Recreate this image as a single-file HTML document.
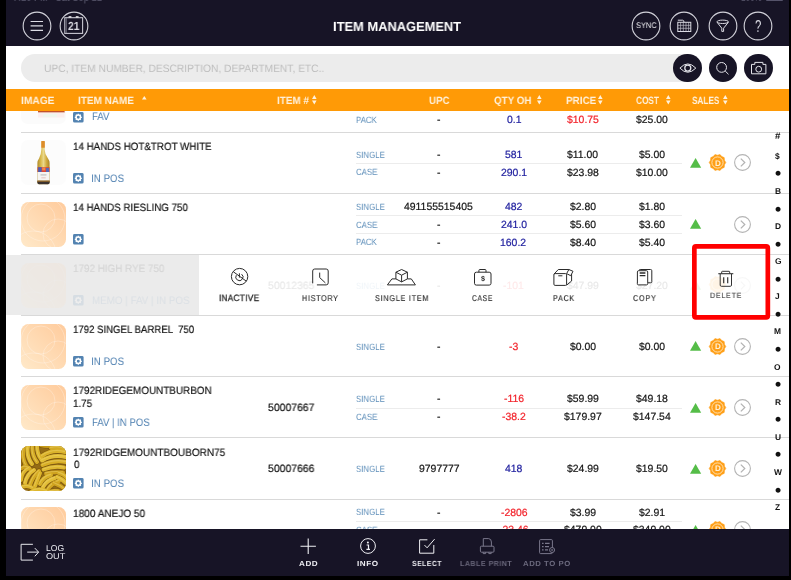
<!DOCTYPE html>
<html lang="en"><head><meta charset="utf-8"><title>Item Management</title>
<style>
html,body{margin:0;padding:0;}
body{width:791px;height:580px;background:#000;overflow:hidden;position:relative;font-family:"Liberation Sans", sans-serif;}
#app{position:absolute;left:0;top:0;width:791px;height:580px;overflow:hidden;}
#app div,#app svg,#app span.t{position:absolute;}
#app svg{overflow:visible;}
span.t{white-space:pre;transform-origin:0 50%;will-change:transform;text-rendering:geometricPrecision;}
</style></head><body><div id="app">
<div style="left:6px;top:0px;width:783px;height:576px;background:#fff;"></div>
<svg style="left:21px;top:79.2px;" width="45" height="45" viewBox="0 0 45 45"><rect width="45" height="45" rx="7" fill="#fbfbfb"/><rect x="17" y="31" width="26.6" height="2.6" fill="#c2522c"/><rect x="17" y="33.6" width="26.6" height="5" fill="#fbeeee"/><rect x="22" y="35" width="14" height="3" fill="#eef7ee"/></svg>
<svg style="left:73.3px;top:111.5px;" width="10.6" height="10.6" viewBox="0 0 10.6 10.6"><rect width="10.6" height="10.6" rx="1.5" fill="#5383b1"/><circle cx="5.3" cy="5.3" r="2.2" fill="none" stroke="#fff" stroke-width="1.5"/><g stroke="#fff" stroke-width="1.25"><path d="M5.3 1.8v1.4M5.3 7.4v1.4M1.8 5.3h1.4M7.4 5.3h1.4M2.8 2.8l1 1M6.8 6.8l1 1M2.8 7.8l1-1M6.8 3.8l1-1"/></g></svg>
<span class="t" style="left:91.70px;top:112px;font-size:10.87px;line-height:10.87px;color:#4d7fb0;transform:scaleX(0.8800);">FAV</span>
<span class="t" style="left:356.40px;top:116px;font-size:9.13px;line-height:9.13px;color:#5f8fba;transform:scaleX(0.8600);">PACK</span>
<span class="t" style="left:437.30px;top:116px;font-size:10.43px;line-height:10.43px;color:#151515;transform:scaleX(1.0000);-webkit-text-stroke:0.2px #151515;">-</span>
<span class="t" style="left:506.60px;top:116px;font-size:10.43px;line-height:10.43px;color:#2323a0;transform:scaleX(1.0000);-webkit-text-stroke:0.2px #2323a0;">0.1</span>
<span class="t" style="left:566.50px;top:116px;font-size:10.43px;line-height:10.43px;color:#f2232b;transform:scaleX(1.0000);-webkit-text-stroke:0.2px #f2232b;">$10.75</span>
<span class="t" style="left:635.50px;top:116px;font-size:10.43px;line-height:10.43px;color:#151515;transform:scaleX(1.0000);-webkit-text-stroke:0.2px #151515;">$25.00</span>
<svg style="left:21px;top:140.4px;" width="45" height="45" viewBox="0 0 45 45"><defs><linearGradient id="bg1" x1="0" x2="1"><stop offset="0" stop-color="#b08a2a"/><stop offset=".28" stop-color="#d9ba4c"/><stop offset=".5" stop-color="#ead88a"/><stop offset=".75" stop-color="#d0aa3e"/><stop offset="1" stop-color="#a98426"/></linearGradient></defs>
<rect width="45" height="45" rx="7" fill="#fcfcfc"/>
<path d="M20.5 1.2H23.6V9.5Q23.8 14.5 27 18.5Q28.6 20.6 28.6 23V42.6Q28.6 44.2 27 44.2H18Q16.4 44.2 16.4 42.6V23Q16.4 20.6 18 18.5Q20.2 14.5 20.3 9.5Z" fill="url(#bg1)"/>
<rect x="20.3" y="1" width="3.5" height="6.8" rx=".6" fill="#dd8c2a"/>
<rect x="16.5" y="27.2" width="12" height="4.8" fill="#d8453a"/><rect x="17.2" y="27.2" width="3.4" height="4.8" fill="#4a5fb5"/><rect x="25" y="28" width="3" height="4" fill="#5868b8"/><rect x="21.2" y="27.4" width="3.2" height="3" fill="#f08a4a"/>
<rect x="16.5" y="32" width="12" height="8.8" fill="#f6f4f2"/><rect x="19.5" y="34.6" width="6" height=".7" fill="#999"/><rect x="20.3" y="37.6" width="4.4" height=".6" fill="#d9a0a0"/>
<path d="M16.4 40.8H28.6V42.6Q28.6 44.2 27 44.2H18Q16.4 44.2 16.4 42.6Z" fill="#3a3230"/><rect x="16.4" y="40.6" width="12.2" height="1" fill="#b07a28"/></svg>
<div style="left:21px;top:131.9px;width:768px;height:1px;background:#d9d9d9;"></div>
<span class="t" style="left:72.87px;top:142px;font-size:10.58px;line-height:10.58px;color:#151515;transform:scaleX(0.9264);-webkit-text-stroke:0.2px #151515;">14 HANDS HOT&amp;TROT WHITE</span>
<svg style="left:73.3px;top:172.60000000000002px;" width="10.6" height="10.6" viewBox="0 0 10.6 10.6"><rect width="10.6" height="10.6" rx="1.5" fill="#5383b1"/><circle cx="5.3" cy="5.3" r="2.2" fill="none" stroke="#fff" stroke-width="1.5"/><g stroke="#fff" stroke-width="1.25"><path d="M5.3 1.8v1.4M5.3 7.4v1.4M1.8 5.3h1.4M7.4 5.3h1.4M2.8 2.8l1 1M6.8 6.8l1 1M2.8 7.8l1-1M6.8 3.8l1-1"/></g></svg>
<span class="t" style="left:90.80px;top:174px;font-size:10.87px;line-height:10.87px;color:#4d7fb0;transform:scaleX(0.9000);">IN POS</span>
<span class="t" style="left:356.40px;top:151px;font-size:9.13px;line-height:9.13px;color:#5f8fba;transform:scaleX(0.8600);">SINGLE</span>
<span class="t" style="left:437.30px;top:151px;font-size:10.43px;line-height:10.43px;color:#151515;transform:scaleX(1.0000);-webkit-text-stroke:0.2px #151515;">-</span>
<span class="t" style="left:505.10px;top:151px;font-size:10.43px;line-height:10.43px;color:#2323a0;transform:scaleX(1.0000);-webkit-text-stroke:0.2px #2323a0;">581</span>
<span class="t" style="left:567.00px;top:151px;font-size:10.43px;line-height:10.43px;color:#151515;transform:scaleX(1.0000);-webkit-text-stroke:0.2px #151515;">$11.00</span>
<span class="t" style="left:638.50px;top:151px;font-size:10.43px;line-height:10.43px;color:#151515;transform:scaleX(1.0000);-webkit-text-stroke:0.2px #151515;">$5.00</span>
<div style="left:356.4px;top:163.2px;width:325.5px;height:1px;background:#ececec;"></div>
<span class="t" style="left:356.40px;top:168px;font-size:9.13px;line-height:9.13px;color:#5f8fba;transform:scaleX(0.8600);">CASE</span>
<span class="t" style="left:437.30px;top:169px;font-size:10.43px;line-height:10.43px;color:#151515;transform:scaleX(1.0000);-webkit-text-stroke:0.2px #151515;">-</span>
<span class="t" style="left:500.60px;top:169px;font-size:10.43px;line-height:10.43px;color:#2323a0;transform:scaleX(1.0000);-webkit-text-stroke:0.2px #2323a0;">290.1</span>
<span class="t" style="left:566.50px;top:169px;font-size:10.43px;line-height:10.43px;color:#151515;transform:scaleX(1.0000);-webkit-text-stroke:0.2px #151515;">$23.98</span>
<span class="t" style="left:635.50px;top:169px;font-size:10.43px;line-height:10.43px;color:#151515;transform:scaleX(1.0000);-webkit-text-stroke:0.2px #151515;">$10.00</span>
<svg style="left:690.1px;top:158.1px;" width="11.2" height="9.8" viewBox="0 0 11.2 9.8"><path d="M5.6 0L11.2 9.8H0Z" fill="#55bd48"/></svg>
<svg style="left:709.2px;top:154.20000000000002px;" width="17" height="17" viewBox="0 0 17 17"><polygon points="16.80,8.50 15.44,10.76 15.21,13.38 12.79,14.41 11.06,16.39 8.50,15.80 5.94,16.39 4.21,14.41 1.79,13.38 1.56,10.76 0.20,8.50 1.56,6.24 1.79,3.62 4.21,2.59 5.94,0.61 8.50,1.20 11.06,0.61 12.79,2.59 15.21,3.62 15.44,6.24" fill="#ff9f17" stroke="#ff9f17" stroke-width=".6" stroke-linejoin="round"/><circle cx="8.5" cy="8.5" r="5.6" fill="none" stroke="#ffe6bd" stroke-width=".9"/></svg>
<span class="t" style="left:714.95px;top:160px;font-size:8.12px;line-height:8.12px;color:#fff0d6;transform:scaleX(0.9500);font-weight:700;">D</span>
<svg style="left:734.0px;top:154.4px;" width="17" height="17" viewBox="0 0 17 17"><circle cx="8.5" cy="8.5" r="7.9" fill="none" stroke="#b4b4b4" stroke-width="1.1"/><path d="M6.8 4.6L10.8 8.5L6.8 12.4" fill="none" stroke="#b2b2b2" stroke-width="1.2"/></svg>
<svg style="left:21px;top:201.5px;" width="45" height="45" viewBox="0 0 45 45"><defs><linearGradient id="pg" x1="0" y1="1" x2="1" y2="0"><stop offset="0" stop-color="#ffe9c9"/><stop offset="1" stop-color="#ffcb9c"/></linearGradient><clipPath id="pc"><rect width="45" height="45" rx="7.5"/></clipPath></defs><rect width="45" height="45" rx="7.5" fill="url(#pg)"/><g clip-path="url(#pc)" fill="none" stroke="#fff" stroke-opacity=".55" stroke-width=".5"><circle cx="20" cy="16" r="14"/><circle cx="37" cy="32" r="15"/><circle cx="12" cy="52" r="23"/><circle cx="22" cy="17" r="22"/></g></svg>
<div style="left:21px;top:193.0px;width:768px;height:1px;background:#d9d9d9;"></div>
<span class="t" style="left:72.88px;top:203px;font-size:10.58px;line-height:10.58px;color:#151515;transform:scaleX(0.9218);-webkit-text-stroke:0.2px #151515;">14 HANDS RIESLING 750</span>
<svg style="left:73.3px;top:233.7px;" width="10.6" height="10.6" viewBox="0 0 10.6 10.6"><rect width="10.6" height="10.6" rx="1.5" fill="#5383b1"/><circle cx="5.3" cy="5.3" r="2.2" fill="none" stroke="#fff" stroke-width="1.5"/><g stroke="#fff" stroke-width="1.25"><path d="M5.3 1.8v1.4M5.3 7.4v1.4M1.8 5.3h1.4M7.4 5.3h1.4M2.8 2.8l1 1M6.8 6.8l1 1M2.8 7.8l1-1M6.8 3.8l1-1"/></g></svg>
<span class="t" style="left:356.40px;top:203px;font-size:9.13px;line-height:9.13px;color:#5f8fba;transform:scaleX(0.8600);">SINGLE</span>
<span class="t" style="left:404.30px;top:203px;font-size:10.43px;line-height:10.43px;color:#151515;transform:scaleX(1.0000);-webkit-text-stroke:0.2px #151515;">491155515405</span>
<span class="t" style="left:505.10px;top:203px;font-size:10.43px;line-height:10.43px;color:#2323a0;transform:scaleX(1.0000);-webkit-text-stroke:0.2px #2323a0;">482</span>
<span class="t" style="left:569.50px;top:203px;font-size:10.43px;line-height:10.43px;color:#151515;transform:scaleX(1.0000);-webkit-text-stroke:0.2px #151515;">$2.80</span>
<span class="t" style="left:638.50px;top:203px;font-size:10.43px;line-height:10.43px;color:#151515;transform:scaleX(1.0000);-webkit-text-stroke:0.2px #151515;">$1.80</span>
<div style="left:356.4px;top:215.4px;width:325.5px;height:1px;background:#ececec;"></div>
<span class="t" style="left:356.40px;top:221px;font-size:9.13px;line-height:9.13px;color:#5f8fba;transform:scaleX(0.8600);">CASE</span>
<span class="t" style="left:437.30px;top:221px;font-size:10.43px;line-height:10.43px;color:#151515;transform:scaleX(1.0000);-webkit-text-stroke:0.2px #151515;">-</span>
<span class="t" style="left:500.60px;top:221px;font-size:10.43px;line-height:10.43px;color:#2323a0;transform:scaleX(1.0000);-webkit-text-stroke:0.2px #2323a0;">241.0</span>
<span class="t" style="left:569.50px;top:221px;font-size:10.43px;line-height:10.43px;color:#151515;transform:scaleX(1.0000);-webkit-text-stroke:0.2px #151515;">$5.60</span>
<span class="t" style="left:638.50px;top:221px;font-size:10.43px;line-height:10.43px;color:#151515;transform:scaleX(1.0000);-webkit-text-stroke:0.2px #151515;">$3.60</span>
<div style="left:356.4px;top:233.2px;width:325.5px;height:1px;background:#ececec;"></div>
<span class="t" style="left:356.40px;top:238px;font-size:9.13px;line-height:9.13px;color:#5f8fba;transform:scaleX(0.8600);">PACK</span>
<span class="t" style="left:437.30px;top:239px;font-size:10.43px;line-height:10.43px;color:#151515;transform:scaleX(1.0000);-webkit-text-stroke:0.2px #151515;">-</span>
<span class="t" style="left:500.10px;top:239px;font-size:10.43px;line-height:10.43px;color:#2323a0;transform:scaleX(1.0000);-webkit-text-stroke:0.2px #2323a0;">160.2</span>
<span class="t" style="left:569.50px;top:239px;font-size:10.43px;line-height:10.43px;color:#151515;transform:scaleX(1.0000);-webkit-text-stroke:0.2px #151515;">$8.40</span>
<span class="t" style="left:638.50px;top:239px;font-size:10.43px;line-height:10.43px;color:#151515;transform:scaleX(1.0000);-webkit-text-stroke:0.2px #151515;">$5.40</span>
<svg style="left:690.1px;top:219.2px;" width="11.2" height="9.8" viewBox="0 0 11.2 9.8"><path d="M5.6 0L11.2 9.8H0Z" fill="#55bd48"/></svg>
<svg style="left:734.0px;top:215.5px;" width="17" height="17" viewBox="0 0 17 17"><circle cx="8.5" cy="8.5" r="7.9" fill="none" stroke="#b4b4b4" stroke-width="1.1"/><path d="M6.8 4.6L10.8 8.5L6.8 12.4" fill="none" stroke="#b2b2b2" stroke-width="1.2"/></svg>
<svg style="left:21px;top:323.70000000000005px;" width="45" height="45" viewBox="0 0 45 45"><defs><linearGradient id="pg" x1="0" y1="1" x2="1" y2="0"><stop offset="0" stop-color="#ffe9c9"/><stop offset="1" stop-color="#ffcb9c"/></linearGradient><clipPath id="pc"><rect width="45" height="45" rx="7.5"/></clipPath></defs><rect width="45" height="45" rx="7.5" fill="url(#pg)"/><g clip-path="url(#pc)" fill="none" stroke="#fff" stroke-opacity=".55" stroke-width=".5"><circle cx="20" cy="16" r="14"/><circle cx="37" cy="32" r="15"/><circle cx="12" cy="52" r="23"/><circle cx="22" cy="17" r="22"/></g></svg>
<div style="left:21px;top:315.2px;width:768px;height:1px;background:#d9d9d9;"></div>
<span class="t" style="left:72.89px;top:325px;font-size:10.58px;line-height:10.58px;color:#151515;transform:scaleX(0.9083);-webkit-text-stroke:0.2px #151515;">1792 SINGEL BARREL  750</span>
<svg style="left:73.3px;top:355.90000000000003px;" width="10.6" height="10.6" viewBox="0 0 10.6 10.6"><rect width="10.6" height="10.6" rx="1.5" fill="#5383b1"/><circle cx="5.3" cy="5.3" r="2.2" fill="none" stroke="#fff" stroke-width="1.5"/><g stroke="#fff" stroke-width="1.25"><path d="M5.3 1.8v1.4M5.3 7.4v1.4M1.8 5.3h1.4M7.4 5.3h1.4M2.8 2.8l1 1M6.8 6.8l1 1M2.8 7.8l1-1M6.8 3.8l1-1"/></g></svg>
<span class="t" style="left:90.80px;top:357px;font-size:10.87px;line-height:10.87px;color:#4d7fb0;transform:scaleX(0.9000);">IN POS</span>
<span class="t" style="left:356.40px;top:343px;font-size:9.13px;line-height:9.13px;color:#5f8fba;transform:scaleX(0.8600);">SINGLE</span>
<span class="t" style="left:437.30px;top:343px;font-size:10.43px;line-height:10.43px;color:#151515;transform:scaleX(1.0000);-webkit-text-stroke:0.2px #151515;">-</span>
<span class="t" style="left:509.10px;top:343px;font-size:10.43px;line-height:10.43px;color:#f2232b;transform:scaleX(1.0000);-webkit-text-stroke:0.2px #f2232b;">-3</span>
<span class="t" style="left:569.50px;top:343px;font-size:10.43px;line-height:10.43px;color:#151515;transform:scaleX(1.0000);-webkit-text-stroke:0.2px #151515;">$0.00</span>
<span class="t" style="left:638.50px;top:343px;font-size:10.43px;line-height:10.43px;color:#151515;transform:scaleX(1.0000);-webkit-text-stroke:0.2px #151515;">$0.00</span>
<svg style="left:690.1px;top:341.40000000000003px;" width="11.2" height="9.8" viewBox="0 0 11.2 9.8"><path d="M5.6 0L11.2 9.8H0Z" fill="#55bd48"/></svg>
<svg style="left:709.2px;top:337.50000000000006px;" width="17" height="17" viewBox="0 0 17 17"><polygon points="16.80,8.50 15.44,10.76 15.21,13.38 12.79,14.41 11.06,16.39 8.50,15.80 5.94,16.39 4.21,14.41 1.79,13.38 1.56,10.76 0.20,8.50 1.56,6.24 1.79,3.62 4.21,2.59 5.94,0.61 8.50,1.20 11.06,0.61 12.79,2.59 15.21,3.62 15.44,6.24" fill="#ff9f17" stroke="#ff9f17" stroke-width=".6" stroke-linejoin="round"/><circle cx="8.5" cy="8.5" r="5.6" fill="none" stroke="#ffe6bd" stroke-width=".9"/></svg>
<span class="t" style="left:714.95px;top:343px;font-size:8.12px;line-height:8.12px;color:#fff0d6;transform:scaleX(0.9500);font-weight:700;">D</span>
<svg style="left:734.0px;top:337.70000000000005px;" width="17" height="17" viewBox="0 0 17 17"><circle cx="8.5" cy="8.5" r="7.9" fill="none" stroke="#b4b4b4" stroke-width="1.1"/><path d="M6.8 4.6L10.8 8.5L6.8 12.4" fill="none" stroke="#b2b2b2" stroke-width="1.2"/></svg>
<svg style="left:21px;top:384.8px;" width="45" height="45" viewBox="0 0 45 45"><defs><linearGradient id="pg" x1="0" y1="1" x2="1" y2="0"><stop offset="0" stop-color="#ffe9c9"/><stop offset="1" stop-color="#ffcb9c"/></linearGradient><clipPath id="pc"><rect width="45" height="45" rx="7.5"/></clipPath></defs><rect width="45" height="45" rx="7.5" fill="url(#pg)"/><g clip-path="url(#pc)" fill="none" stroke="#fff" stroke-opacity=".55" stroke-width=".5"><circle cx="20" cy="16" r="14"/><circle cx="37" cy="32" r="15"/><circle cx="12" cy="52" r="23"/><circle cx="22" cy="17" r="22"/></g></svg>
<div style="left:21px;top:376.3px;width:768px;height:1px;background:#d9d9d9;"></div>
<span class="t" style="left:72.86px;top:386px;font-size:10.58px;line-height:10.58px;color:#151515;transform:scaleX(0.9361);-webkit-text-stroke:0.2px #151515;">1792RIDEGEMOUNTBURBON</span>
<span class="t" style="left:72.88px;top:399px;font-size:10.58px;line-height:10.58px;color:#151515;transform:scaleX(0.9250);-webkit-text-stroke:0.2px #151515;">1.75</span>
<svg style="left:73.3px;top:417.0px;" width="10.6" height="10.6" viewBox="0 0 10.6 10.6"><rect width="10.6" height="10.6" rx="1.5" fill="#5383b1"/><circle cx="5.3" cy="5.3" r="2.2" fill="none" stroke="#fff" stroke-width="1.5"/><g stroke="#fff" stroke-width="1.25"><path d="M5.3 1.8v1.4M5.3 7.4v1.4M1.8 5.3h1.4M7.4 5.3h1.4M2.8 2.8l1 1M6.8 6.8l1 1M2.8 7.8l1-1M6.8 3.8l1-1"/></g></svg>
<span class="t" style="left:91.70px;top:418px;font-size:10.87px;line-height:10.87px;color:#4d7fb0;transform:scaleX(0.8815);">FAV | IN POS</span>
<span class="t" style="left:268.10px;top:403px;font-size:10.58px;line-height:10.58px;color:#151515;transform:scaleX(0.9850);-webkit-text-stroke:0.2px #151515;">50007667</span>
<span class="t" style="left:356.40px;top:395px;font-size:9.13px;line-height:9.13px;color:#5f8fba;transform:scaleX(0.8600);">SINGLE</span>
<span class="t" style="left:437.30px;top:395px;font-size:10.43px;line-height:10.43px;color:#151515;transform:scaleX(1.0000);-webkit-text-stroke:0.2px #151515;">-</span>
<span class="t" style="left:503.60px;top:395px;font-size:10.43px;line-height:10.43px;color:#f2232b;transform:scaleX(1.0000);-webkit-text-stroke:0.2px #f2232b;">-116</span>
<span class="t" style="left:566.50px;top:395px;font-size:10.43px;line-height:10.43px;color:#151515;transform:scaleX(1.0000);-webkit-text-stroke:0.2px #151515;">$59.99</span>
<span class="t" style="left:635.50px;top:395px;font-size:10.43px;line-height:10.43px;color:#151515;transform:scaleX(1.0000);-webkit-text-stroke:0.2px #151515;">$49.18</span>
<div style="left:356.4px;top:407.6px;width:325.5px;height:1px;background:#ececec;"></div>
<span class="t" style="left:356.40px;top:413px;font-size:9.13px;line-height:9.13px;color:#5f8fba;transform:scaleX(0.8600);">CASE</span>
<span class="t" style="left:437.30px;top:413px;font-size:10.43px;line-height:10.43px;color:#151515;transform:scaleX(1.0000);-webkit-text-stroke:0.2px #151515;">-</span>
<span class="t" style="left:501.60px;top:413px;font-size:10.43px;line-height:10.43px;color:#f2232b;transform:scaleX(1.0000);-webkit-text-stroke:0.2px #f2232b;">-38.2</span>
<span class="t" style="left:563.50px;top:413px;font-size:10.43px;line-height:10.43px;color:#151515;transform:scaleX(1.0000);-webkit-text-stroke:0.2px #151515;">$179.97</span>
<span class="t" style="left:632.50px;top:413px;font-size:10.43px;line-height:10.43px;color:#151515;transform:scaleX(1.0000);-webkit-text-stroke:0.2px #151515;">$147.54</span>
<svg style="left:690.1px;top:402.5px;" width="11.2" height="9.8" viewBox="0 0 11.2 9.8"><path d="M5.6 0L11.2 9.8H0Z" fill="#55bd48"/></svg>
<svg style="left:709.2px;top:398.6px;" width="17" height="17" viewBox="0 0 17 17"><polygon points="16.80,8.50 15.44,10.76 15.21,13.38 12.79,14.41 11.06,16.39 8.50,15.80 5.94,16.39 4.21,14.41 1.79,13.38 1.56,10.76 0.20,8.50 1.56,6.24 1.79,3.62 4.21,2.59 5.94,0.61 8.50,1.20 11.06,0.61 12.79,2.59 15.21,3.62 15.44,6.24" fill="#ff9f17" stroke="#ff9f17" stroke-width=".6" stroke-linejoin="round"/><circle cx="8.5" cy="8.5" r="5.6" fill="none" stroke="#ffe6bd" stroke-width=".9"/></svg>
<span class="t" style="left:714.95px;top:404px;font-size:8.12px;line-height:8.12px;color:#fff0d6;transform:scaleX(0.9500);font-weight:700;">D</span>
<svg style="left:734.0px;top:398.8px;" width="17" height="17" viewBox="0 0 17 17"><circle cx="8.5" cy="8.5" r="7.9" fill="none" stroke="#b4b4b4" stroke-width="1.1"/><path d="M6.8 4.6L10.8 8.5L6.8 12.4" fill="none" stroke="#b2b2b2" stroke-width="1.2"/></svg>
<svg style="left:21px;top:445.90000000000003px;" width="45" height="45" viewBox="0 0 45 45"><defs><clipPath id="bc"><rect width="45" height="45" rx="7.5"/></clipPath><filter id="bb" x="-5%" y="-5%" width="110%" height="110%"><feGaussianBlur stdDeviation=".45"/></filter></defs><g clip-path="url(#bc)"><rect width="45" height="45" fill="#8f6a16"/><g filter="url(#bb)"><path d="M3 1Q0 12 6 21" stroke="#6b4a10" stroke-width="5.4" stroke-linecap="round" fill="none" opacity=".7"/><path d="M7 0Q5 10 11 18" stroke="#6b4a10" stroke-width="5.4" stroke-linecap="round" fill="none" opacity=".7"/><path d="M11.5 -1Q10.5 9 16 16" stroke="#6b4a10" stroke-width="5.4" stroke-linecap="round" fill="none" opacity=".7"/><path d="M16 -1Q16 8 20 13" stroke="#6b4a10" stroke-width="5.4" stroke-linecap="round" fill="none" opacity=".7"/><path d="M20 -1Q26 1 33 -1" stroke="#6b4a10" stroke-width="5.4" stroke-linecap="round" fill="none" opacity=".7"/><path d="M30 2Q37 0 45 3" stroke="#6b4a10" stroke-width="5.4" stroke-linecap="round" fill="none" opacity=".7"/><path d="M21 10Q31 3 44 6" stroke="#6b4a10" stroke-width="5.4" stroke-linecap="round" fill="none" opacity=".7"/><path d="M21 14.5Q32 8 45 11" stroke="#6b4a10" stroke-width="5.4" stroke-linecap="round" fill="none" opacity=".7"/><path d="M21.5 19Q33 13.5 45 16" stroke="#6b4a10" stroke-width="5.4" stroke-linecap="round" fill="none" opacity=".7"/><path d="M22.5 23.5Q33 19.5 43 21.5" stroke="#6b4a10" stroke-width="5.4" stroke-linecap="round" fill="none" opacity=".7"/><path d="M25 27.5Q34 25.5 42 26.5" stroke="#6b4a10" stroke-width="5.4" stroke-linecap="round" fill="none" opacity=".7"/><path d="M1 22Q5 19 9 23" stroke="#6b4a10" stroke-width="5.4" stroke-linecap="round" fill="none" opacity=".7"/><path d="M0 34Q1 25 8 22" stroke="#6b4a10" stroke-width="5.4" stroke-linecap="round" fill="none" opacity=".7"/><path d="M4 37Q6 28 13 24" stroke="#6b4a10" stroke-width="5.4" stroke-linecap="round" fill="none" opacity=".7"/><path d="M9 39Q12 30 18 25" stroke="#6b4a10" stroke-width="5.4" stroke-linecap="round" fill="none" opacity=".7"/><path d="M14 40Q17 32 19 27" stroke="#6b4a10" stroke-width="5.4" stroke-linecap="round" fill="none" opacity=".7"/><path d="M19 38Q22 31 30 29" stroke="#6b4a10" stroke-width="5.4" stroke-linecap="round" fill="none" opacity=".7"/><path d="M22 41Q26 34 34 32" stroke="#6b4a10" stroke-width="5.4" stroke-linecap="round" fill="none" opacity=".7"/><path d="M27 43Q31 37 38 35" stroke="#6b4a10" stroke-width="5.4" stroke-linecap="round" fill="none" opacity=".7"/><path d="M38 27Q43 28 46 32" stroke="#6b4a10" stroke-width="5.4" stroke-linecap="round" fill="none" opacity=".7"/><path d="M36 31Q42 33 46 38" stroke="#6b4a10" stroke-width="5.4" stroke-linecap="round" fill="none" opacity=".7"/><path d="M33 37Q39 39 45 44" stroke="#6b4a10" stroke-width="5.4" stroke-linecap="round" fill="none" opacity=".7"/><path d="M-1 42Q5 38 12 42" stroke="#6b4a10" stroke-width="5.4" stroke-linecap="round" fill="none" opacity=".7"/><path d="M10 46Q17 41 26 45" stroke="#6b4a10" stroke-width="5.4" stroke-linecap="round" fill="none" opacity=".7"/><path d="M26 47Q33 43 40 46" stroke="#6b4a10" stroke-width="5.4" stroke-linecap="round" fill="none" opacity=".7"/><path d="M3 1Q0 12 6 21" stroke="#d6ae24" stroke-width="4" stroke-linecap="round" fill="none"/><path d="M3 1Q0 12 6 21" stroke="#f6e27a" stroke-width="1.1" stroke-linecap="round" fill="none" opacity=".55" transform="translate(-.5,-.6)"/><path d="M7 0Q5 10 11 18" stroke="#e9c93a" stroke-width="4" stroke-linecap="round" fill="none"/><path d="M7 0Q5 10 11 18" stroke="#f6e27a" stroke-width="1.1" stroke-linecap="round" fill="none" opacity=".55" transform="translate(-.5,-.6)"/><path d="M11.5 -1Q10.5 9 16 16" stroke="#dcb62a" stroke-width="4" stroke-linecap="round" fill="none"/><path d="M11.5 -1Q10.5 9 16 16" stroke="#f6e27a" stroke-width="1.1" stroke-linecap="round" fill="none" opacity=".55" transform="translate(-.5,-.6)"/><path d="M16 -1Q16 8 20 13" stroke="#e6c434" stroke-width="4" stroke-linecap="round" fill="none"/><path d="M16 -1Q16 8 20 13" stroke="#f6e27a" stroke-width="1.1" stroke-linecap="round" fill="none" opacity=".55" transform="translate(-.5,-.6)"/><path d="M20 -1Q26 1 33 -1" stroke="#caa21e" stroke-width="4" stroke-linecap="round" fill="none"/><path d="M20 -1Q26 1 33 -1" stroke="#f6e27a" stroke-width="1.1" stroke-linecap="round" fill="none" opacity=".55" transform="translate(-.5,-.6)"/><path d="M30 2Q37 0 45 3" stroke="#d9b42a" stroke-width="4" stroke-linecap="round" fill="none"/><path d="M30 2Q37 0 45 3" stroke="#f6e27a" stroke-width="1.1" stroke-linecap="round" fill="none" opacity=".55" transform="translate(-.5,-.6)"/><path d="M21 10Q31 3 44 6" stroke="#e2be30" stroke-width="4" stroke-linecap="round" fill="none"/><path d="M21 10Q31 3 44 6" stroke="#f6e27a" stroke-width="1.1" stroke-linecap="round" fill="none" opacity=".55" transform="translate(-.5,-.6)"/><path d="M21 14.5Q32 8 45 11" stroke="#eccd40" stroke-width="4" stroke-linecap="round" fill="none"/><path d="M21 14.5Q32 8 45 11" stroke="#f6e27a" stroke-width="1.1" stroke-linecap="round" fill="none" opacity=".55" transform="translate(-.5,-.6)"/><path d="M21.5 19Q33 13.5 45 16" stroke="#e0ba2c" stroke-width="4" stroke-linecap="round" fill="none"/><path d="M21.5 19Q33 13.5 45 16" stroke="#f6e27a" stroke-width="1.1" stroke-linecap="round" fill="none" opacity=".55" transform="translate(-.5,-.6)"/><path d="M22.5 23.5Q33 19.5 43 21.5" stroke="#e8c638" stroke-width="4" stroke-linecap="round" fill="none"/><path d="M22.5 23.5Q33 19.5 43 21.5" stroke="#f6e27a" stroke-width="1.1" stroke-linecap="round" fill="none" opacity=".55" transform="translate(-.5,-.6)"/><path d="M25 27.5Q34 25.5 42 26.5" stroke="#d4aa22" stroke-width="4" stroke-linecap="round" fill="none"/><path d="M25 27.5Q34 25.5 42 26.5" stroke="#f6e27a" stroke-width="1.1" stroke-linecap="round" fill="none" opacity=".55" transform="translate(-.5,-.6)"/><path d="M1 22Q5 19 9 23" stroke="#d2a820" stroke-width="4" stroke-linecap="round" fill="none"/><path d="M1 22Q5 19 9 23" stroke="#f6e27a" stroke-width="1.1" stroke-linecap="round" fill="none" opacity=".55" transform="translate(-.5,-.6)"/><path d="M0 34Q1 25 8 22" stroke="#e4c032" stroke-width="4" stroke-linecap="round" fill="none"/><path d="M0 34Q1 25 8 22" stroke="#f6e27a" stroke-width="1.1" stroke-linecap="round" fill="none" opacity=".55" transform="translate(-.5,-.6)"/><path d="M4 37Q6 28 13 24" stroke="#ecca3c" stroke-width="4" stroke-linecap="round" fill="none"/><path d="M4 37Q6 28 13 24" stroke="#f6e27a" stroke-width="1.1" stroke-linecap="round" fill="none" opacity=".55" transform="translate(-.5,-.6)"/><path d="M9 39Q12 30 18 25" stroke="#dcb428" stroke-width="4" stroke-linecap="round" fill="none"/><path d="M9 39Q12 30 18 25" stroke="#f6e27a" stroke-width="1.1" stroke-linecap="round" fill="none" opacity=".55" transform="translate(-.5,-.6)"/><path d="M14 40Q17 32 19 27" stroke="#e6c232" stroke-width="4" stroke-linecap="round" fill="none"/><path d="M14 40Q17 32 19 27" stroke="#f6e27a" stroke-width="1.1" stroke-linecap="round" fill="none" opacity=".55" transform="translate(-.5,-.6)"/><path d="M19 38Q22 31 30 29" stroke="#e0bc2e" stroke-width="4" stroke-linecap="round" fill="none"/><path d="M19 38Q22 31 30 29" stroke="#f6e27a" stroke-width="1.1" stroke-linecap="round" fill="none" opacity=".55" transform="translate(-.5,-.6)"/><path d="M22 41Q26 34 34 32" stroke="#eccc40" stroke-width="4" stroke-linecap="round" fill="none"/><path d="M22 41Q26 34 34 32" stroke="#f6e27a" stroke-width="1.1" stroke-linecap="round" fill="none" opacity=".55" transform="translate(-.5,-.6)"/><path d="M27 43Q31 37 38 35" stroke="#d8b026" stroke-width="4" stroke-linecap="round" fill="none"/><path d="M27 43Q31 37 38 35" stroke="#f6e27a" stroke-width="1.1" stroke-linecap="round" fill="none" opacity=".55" transform="translate(-.5,-.6)"/><path d="M38 27Q43 28 46 32" stroke="#dcb62a" stroke-width="4" stroke-linecap="round" fill="none"/><path d="M38 27Q43 28 46 32" stroke="#f6e27a" stroke-width="1.1" stroke-linecap="round" fill="none" opacity=".55" transform="translate(-.5,-.6)"/><path d="M36 31Q42 33 46 38" stroke="#e8c638" stroke-width="4" stroke-linecap="round" fill="none"/><path d="M36 31Q42 33 46 38" stroke="#f6e27a" stroke-width="1.1" stroke-linecap="round" fill="none" opacity=".55" transform="translate(-.5,-.6)"/><path d="M33 37Q39 39 45 44" stroke="#d6ac24" stroke-width="4" stroke-linecap="round" fill="none"/><path d="M33 37Q39 39 45 44" stroke="#f6e27a" stroke-width="1.1" stroke-linecap="round" fill="none" opacity=".55" transform="translate(-.5,-.6)"/><path d="M-1 42Q5 38 12 42" stroke="#e2be30" stroke-width="4" stroke-linecap="round" fill="none"/><path d="M-1 42Q5 38 12 42" stroke="#f6e27a" stroke-width="1.1" stroke-linecap="round" fill="none" opacity=".55" transform="translate(-.5,-.6)"/><path d="M10 46Q17 41 26 45" stroke="#e6c434" stroke-width="4" stroke-linecap="round" fill="none"/><path d="M10 46Q17 41 26 45" stroke="#f6e27a" stroke-width="1.1" stroke-linecap="round" fill="none" opacity=".55" transform="translate(-.5,-.6)"/><path d="M26 47Q33 43 40 46" stroke="#dab22a" stroke-width="4" stroke-linecap="round" fill="none"/><path d="M26 47Q33 43 40 46" stroke="#f6e27a" stroke-width="1.1" stroke-linecap="round" fill="none" opacity=".55" transform="translate(-.5,-.6)"/></g><rect width="45" height="45" fill="#b4780c" opacity=".16"/></g></svg>
<div style="left:21px;top:437.4px;width:768px;height:1px;background:#d9d9d9;"></div>
<span class="t" style="left:72.86px;top:448px;font-size:10.58px;line-height:10.58px;color:#151515;transform:scaleX(0.9450);-webkit-text-stroke:0.2px #151515;">1792RIDGEMOUNTBOUBORN75</span>
<span class="t" style="left:73.80px;top:460px;font-size:10.58px;line-height:10.58px;color:#151515;transform:scaleX(0.9250);-webkit-text-stroke:0.2px #151515;">0</span>
<svg style="left:73.3px;top:478.1px;" width="10.6" height="10.6" viewBox="0 0 10.6 10.6"><rect width="10.6" height="10.6" rx="1.5" fill="#5383b1"/><circle cx="5.3" cy="5.3" r="2.2" fill="none" stroke="#fff" stroke-width="1.5"/><g stroke="#fff" stroke-width="1.25"><path d="M5.3 1.8v1.4M5.3 7.4v1.4M1.8 5.3h1.4M7.4 5.3h1.4M2.8 2.8l1 1M6.8 6.8l1 1M2.8 7.8l1-1M6.8 3.8l1-1"/></g></svg>
<span class="t" style="left:90.80px;top:479px;font-size:10.87px;line-height:10.87px;color:#4d7fb0;transform:scaleX(0.9000);">IN POS</span>
<span class="t" style="left:268.10px;top:464px;font-size:10.58px;line-height:10.58px;color:#151515;transform:scaleX(0.9850);-webkit-text-stroke:0.2px #151515;">50007666</span>
<span class="t" style="left:356.40px;top:465px;font-size:9.13px;line-height:9.13px;color:#5f8fba;transform:scaleX(0.8600);">SINGLE</span>
<span class="t" style="left:418.80px;top:465px;font-size:10.43px;line-height:10.43px;color:#151515;transform:scaleX(1.0000);-webkit-text-stroke:0.2px #151515;">9797777</span>
<span class="t" style="left:505.10px;top:465px;font-size:10.43px;line-height:10.43px;color:#2323a0;transform:scaleX(1.0000);-webkit-text-stroke:0.2px #2323a0;">418</span>
<span class="t" style="left:566.50px;top:465px;font-size:10.43px;line-height:10.43px;color:#151515;transform:scaleX(1.0000);-webkit-text-stroke:0.2px #151515;">$24.99</span>
<span class="t" style="left:635.50px;top:465px;font-size:10.43px;line-height:10.43px;color:#151515;transform:scaleX(1.0000);-webkit-text-stroke:0.2px #151515;">$19.50</span>
<svg style="left:690.1px;top:463.6px;" width="11.2" height="9.8" viewBox="0 0 11.2 9.8"><path d="M5.6 0L11.2 9.8H0Z" fill="#55bd48"/></svg>
<svg style="left:709.2px;top:459.70000000000005px;" width="17" height="17" viewBox="0 0 17 17"><polygon points="16.80,8.50 15.44,10.76 15.21,13.38 12.79,14.41 11.06,16.39 8.50,15.80 5.94,16.39 4.21,14.41 1.79,13.38 1.56,10.76 0.20,8.50 1.56,6.24 1.79,3.62 4.21,2.59 5.94,0.61 8.50,1.20 11.06,0.61 12.79,2.59 15.21,3.62 15.44,6.24" fill="#ff9f17" stroke="#ff9f17" stroke-width=".6" stroke-linejoin="round"/><circle cx="8.5" cy="8.5" r="5.6" fill="none" stroke="#ffe6bd" stroke-width=".9"/></svg>
<span class="t" style="left:714.95px;top:465px;font-size:8.12px;line-height:8.12px;color:#fff0d6;transform:scaleX(0.9500);font-weight:700;">D</span>
<svg style="left:734.0px;top:459.90000000000003px;" width="17" height="17" viewBox="0 0 17 17"><circle cx="8.5" cy="8.5" r="7.9" fill="none" stroke="#b4b4b4" stroke-width="1.1"/><path d="M6.8 4.6L10.8 8.5L6.8 12.4" fill="none" stroke="#b2b2b2" stroke-width="1.2"/></svg>
<svg style="left:21px;top:507.0px;" width="45" height="45" viewBox="0 0 45 45"><defs><linearGradient id="pg" x1="0" y1="1" x2="1" y2="0"><stop offset="0" stop-color="#ffe9c9"/><stop offset="1" stop-color="#ffcb9c"/></linearGradient><clipPath id="pc"><rect width="45" height="45" rx="7.5"/></clipPath></defs><rect width="45" height="45" rx="7.5" fill="url(#pg)"/><g clip-path="url(#pc)" fill="none" stroke="#fff" stroke-opacity=".55" stroke-width=".5"><circle cx="20" cy="16" r="14"/><circle cx="37" cy="32" r="15"/><circle cx="12" cy="52" r="23"/><circle cx="22" cy="17" r="22"/></g></svg>
<div style="left:21px;top:498.5px;width:768px;height:1px;background:#d9d9d9;"></div>
<span class="t" style="left:72.85px;top:509px;font-size:10.58px;line-height:10.58px;color:#151515;transform:scaleX(0.9507);-webkit-text-stroke:0.2px #151515;">1800 ANEJO 50</span>
<svg style="left:73.3px;top:539.1999999999999px;" width="10.6" height="10.6" viewBox="0 0 10.6 10.6"><rect width="10.6" height="10.6" rx="1.5" fill="#5383b1"/><circle cx="5.3" cy="5.3" r="2.2" fill="none" stroke="#fff" stroke-width="1.5"/><g stroke="#fff" stroke-width="1.25"><path d="M5.3 1.8v1.4M5.3 7.4v1.4M1.8 5.3h1.4M7.4 5.3h1.4M2.8 2.8l1 1M6.8 6.8l1 1M2.8 7.8l1-1M6.8 3.8l1-1"/></g></svg>
<span class="t" style="left:356.40px;top:508px;font-size:9.13px;line-height:9.13px;color:#5f8fba;transform:scaleX(0.8600);">SINGLE</span>
<span class="t" style="left:437.30px;top:509px;font-size:10.43px;line-height:10.43px;color:#151515;transform:scaleX(1.0000);-webkit-text-stroke:0.2px #151515;">-</span>
<span class="t" style="left:500.60px;top:509px;font-size:10.43px;line-height:10.43px;color:#f2232b;transform:scaleX(1.0000);-webkit-text-stroke:0.2px #f2232b;">-2806</span>
<span class="t" style="left:569.50px;top:509px;font-size:10.43px;line-height:10.43px;color:#151515;transform:scaleX(1.0000);-webkit-text-stroke:0.2px #151515;">$3.99</span>
<span class="t" style="left:638.50px;top:509px;font-size:10.43px;line-height:10.43px;color:#151515;transform:scaleX(1.0000);-webkit-text-stroke:0.2px #151515;">$2.91</span>
<div style="left:356.4px;top:520.9px;width:325.5px;height:1px;background:#ececec;"></div>
<span class="t" style="left:356.40px;top:526px;font-size:9.13px;line-height:9.13px;color:#5f8fba;transform:scaleX(0.8600);">CASE</span>
<span class="t" style="left:437.30px;top:526px;font-size:10.43px;line-height:10.43px;color:#151515;transform:scaleX(1.0000);-webkit-text-stroke:0.2px #151515;">-</span>
<span class="t" style="left:499.10px;top:526px;font-size:10.43px;line-height:10.43px;color:#f2232b;transform:scaleX(1.0000);-webkit-text-stroke:0.2px #f2232b;">-23.46</span>
<span class="t" style="left:563.50px;top:526px;font-size:10.43px;line-height:10.43px;color:#151515;transform:scaleX(1.0000);-webkit-text-stroke:0.2px #151515;">$479.00</span>
<span class="t" style="left:632.50px;top:526px;font-size:10.43px;line-height:10.43px;color:#151515;transform:scaleX(1.0000);-webkit-text-stroke:0.2px #151515;">$349.00</span>
<div style="left:356.4px;top:538.7px;width:325.5px;height:1px;background:#ececec;"></div>
<svg style="left:690.1px;top:524.7px;" width="11.2" height="9.8" viewBox="0 0 11.2 9.8"><path d="M5.6 0L11.2 9.8H0Z" fill="#55bd48"/></svg>
<svg style="left:709.2px;top:520.8px;" width="17" height="17" viewBox="0 0 17 17"><polygon points="16.80,8.50 15.44,10.76 15.21,13.38 12.79,14.41 11.06,16.39 8.50,15.80 5.94,16.39 4.21,14.41 1.79,13.38 1.56,10.76 0.20,8.50 1.56,6.24 1.79,3.62 4.21,2.59 5.94,0.61 8.50,1.20 11.06,0.61 12.79,2.59 15.21,3.62 15.44,6.24" fill="#ff9f17" stroke="#ff9f17" stroke-width=".6" stroke-linejoin="round"/><circle cx="8.5" cy="8.5" r="5.6" fill="none" stroke="#ffe6bd" stroke-width=".9"/></svg>
<span class="t" style="left:714.95px;top:526px;font-size:8.12px;line-height:8.12px;color:#fff0d6;transform:scaleX(0.9500);font-weight:700;">D</span>
<svg style="left:734.0px;top:521.0px;" width="17" height="17" viewBox="0 0 17 17"><circle cx="8.5" cy="8.5" r="7.9" fill="none" stroke="#b4b4b4" stroke-width="1.1"/><path d="M6.8 4.6L10.8 8.5L6.8 12.4" fill="none" stroke="#b2b2b2" stroke-width="1.2"/></svg>
<div style="left:6px;top:255px;width:193px;height:60.2px;background:#ebebeb;"></div>
<div style="left:21px;top:254.1px;width:768px;height:1px;background:#d9d9d9;"></div>
<svg style="left:21px;top:262.6px;opacity:0.12;" width="45" height="45" viewBox="0 0 45 45"><defs><linearGradient id="pg" x1="0" y1="1" x2="1" y2="0"><stop offset="0" stop-color="#ffe9c9"/><stop offset="1" stop-color="#ffcb9c"/></linearGradient><clipPath id="pc"><rect width="45" height="45" rx="7.5"/></clipPath></defs><rect width="45" height="45" rx="7.5" fill="url(#pg)"/><g clip-path="url(#pc)" fill="none" stroke="#fff" stroke-opacity=".55" stroke-width=".5"><circle cx="20" cy="16" r="14"/><circle cx="37" cy="32" r="15"/><circle cx="12" cy="52" r="23"/><circle cx="22" cy="17" r="22"/></g></svg>
<div style="left:21px;top:254.1px;width:768px;height:1px;background:#d9d9d9;"></div>
<span class="t" style="left:72.87px;top:264px;font-size:10.58px;line-height:10.58px;color:#151515;transform:scaleX(0.9330);opacity:0.1;-webkit-text-stroke:0.2px #151515;">1792 HIGH RYE 750</span>
<svg style="left:73.3px;top:294.8px;opacity:0.13;" width="10.6" height="10.6" viewBox="0 0 10.6 10.6"><rect width="10.6" height="10.6" rx="1.5" fill="#5383b1"/><circle cx="5.3" cy="5.3" r="2.2" fill="none" stroke="#fff" stroke-width="1.5"/><g stroke="#fff" stroke-width="1.25"><path d="M5.3 1.8v1.4M5.3 7.4v1.4M1.8 5.3h1.4M7.4 5.3h1.4M2.8 2.8l1 1M6.8 6.8l1 1M2.8 7.8l1-1M6.8 3.8l1-1"/></g></svg>
<span class="t" style="left:91.70px;top:296px;font-size:10.87px;line-height:10.87px;color:#4d7fb0;transform:scaleX(0.9037);opacity:0.1;">MEMO | FAV | IN POS</span>
<span class="t" style="left:268.10px;top:281px;font-size:10.58px;line-height:10.58px;color:#151515;transform:scaleX(0.9850);opacity:0.1;-webkit-text-stroke:0.2px #151515;">50012365</span>
<span class="t" style="left:356.40px;top:282px;font-size:9.13px;line-height:9.13px;color:#5f8fba;transform:scaleX(0.8600);opacity:0.1;">SINGLE</span>
<span class="t" style="left:437.30px;top:282px;font-size:10.43px;line-height:10.43px;color:#151515;transform:scaleX(1.0000);opacity:0.1;-webkit-text-stroke:0.2px #151515;">-</span>
<span class="t" style="left:503.10px;top:282px;font-size:10.43px;line-height:10.43px;color:#f2232b;transform:scaleX(1.0000);opacity:0.1;-webkit-text-stroke:0.2px #f2232b;">-101</span>
<span class="t" style="left:566.50px;top:282px;font-size:10.43px;line-height:10.43px;color:#151515;transform:scaleX(1.0000);opacity:0.1;-webkit-text-stroke:0.2px #151515;">$47.99</span>
<span class="t" style="left:635.50px;top:282px;font-size:10.43px;line-height:10.43px;color:#151515;transform:scaleX(1.0000);opacity:0.1;-webkit-text-stroke:0.2px #151515;">$27.20</span>
<svg style="left:690.1px;top:280.3px;opacity:0.1;" width="11.2" height="9.8" viewBox="0 0 11.2 9.8"><path d="M5.6 0L11.2 9.8H0Z" fill="#55bd48"/></svg>
<svg style="left:709.2px;top:276.40000000000003px;opacity:0.1;" width="17" height="17" viewBox="0 0 17 17"><polygon points="16.80,8.50 15.44,10.76 15.21,13.38 12.79,14.41 11.06,16.39 8.50,15.80 5.94,16.39 4.21,14.41 1.79,13.38 1.56,10.76 0.20,8.50 1.56,6.24 1.79,3.62 4.21,2.59 5.94,0.61 8.50,1.20 11.06,0.61 12.79,2.59 15.21,3.62 15.44,6.24" fill="#ff9f17" stroke="#ff9f17" stroke-width=".6" stroke-linejoin="round"/><circle cx="8.5" cy="8.5" r="5.6" fill="none" stroke="#ffe6bd" stroke-width=".9"/></svg>
<span class="t" style="left:714.95px;top:282px;font-size:8.12px;line-height:8.12px;color:#fff0d6;transform:scaleX(0.9500);font-weight:700;opacity:0.1;">D</span>
<svg style="left:734.0px;top:276.6px;opacity:0.1;" width="17" height="17" viewBox="0 0 17 17"><circle cx="8.5" cy="8.5" r="7.9" fill="none" stroke="#b4b4b4" stroke-width="1.1"/><path d="M6.8 4.6L10.8 8.5L6.8 12.4" fill="none" stroke="#b2b2b2" stroke-width="1.2"/></svg>
<span class="t" style="left:218.60px;top:294px;font-size:9.28px;line-height:9.28px;color:#2a2a2a;transform:scaleX(0.8933);letter-spacing:0.3px;-webkit-text-stroke:0.3px #2a2a2a;">INACTIVE</span>
<span class="t" style="left:302.00px;top:294px;font-size:8.41px;line-height:8.41px;color:#2a2a2a;transform:scaleX(0.8476);letter-spacing:0.9px;-webkit-text-stroke:0.15px #2a2a2a;">HISTORY</span>
<span class="t" style="left:374.80px;top:294px;font-size:8.41px;line-height:8.41px;color:#2a2a2a;transform:scaleX(0.8581);letter-spacing:0.9px;-webkit-text-stroke:0.15px #2a2a2a;">SINGLE ITEM</span>
<span class="t" style="left:471.90px;top:294px;font-size:8.41px;line-height:8.41px;color:#2a2a2a;transform:scaleX(0.7923);letter-spacing:0.9px;-webkit-text-stroke:0.15px #2a2a2a;">CASE</span>
<span class="t" style="left:552.60px;top:294px;font-size:8.41px;line-height:8.41px;color:#2a2a2a;transform:scaleX(0.8480);letter-spacing:0.9px;-webkit-text-stroke:0.15px #2a2a2a;">PACK</span>
<span class="t" style="left:633.10px;top:294px;font-size:8.41px;line-height:8.41px;color:#2a2a2a;transform:scaleX(0.8577);letter-spacing:0.9px;-webkit-text-stroke:0.15px #2a2a2a;">COPY</span>
<span class="t" style="left:709.80px;top:292px;font-size:7.68px;line-height:7.68px;color:#3c3c3c;transform:scaleX(0.9118);letter-spacing:0.9px;-webkit-text-stroke:0.15px #3c3c3c;">DELETE</span>
<svg style="left:230px;top:267px;" width="20" height="20" viewBox="0 0 20 20"><circle cx="9.6" cy="9.6" r="8.2" fill="none" stroke="#2a2a2a" stroke-width="1"/><path d="M3.4 4.8L16.2 14.1" stroke="#2a2a2a" stroke-width="1"/><path d="M11.6 7.2A3.6 3.6 0 1 1 6.3 8.2" fill="none" stroke="#2a2a2a" stroke-width="1"/><path d="M9.4 6.3V10.6" stroke="#2a2a2a" stroke-width="1"/></svg>
<svg style="left:311px;top:267px;" width="20" height="20" viewBox="0 0 20 20"><path d="M5.9 17.9H15.2Q17.2 17.9 17.2 15.9V4Q17.2 2 15.2 2H3.7Q1.7 2 1.7 4V16.4" fill="none" stroke="#2a2a2a" stroke-width="1"/><path d="M8.7 5.6V10.6L14.4 15.9" fill="none" stroke="#2a2a2a" stroke-width="1"/></svg>
<svg style="left:386px;top:268px;" width="32" height="18" viewBox="0 0 32 18"><path d="M9.9 10.9H5.9L1.4 16.9H29.4L25.3 10.9H21.4" fill="none" stroke="#2a2a2a" stroke-width="1"/><path d="M15.6 1.5L21.4 4.2V10.9L15.6 13.9L9.9 10.9V4.2Z" fill="none" stroke="#2a2a2a" stroke-width="1" stroke-linejoin="round"/><path d="M9.9 4.2L15.6 7.2L21.4 4.2M15.6 7.2V13.9" fill="none" stroke="#2a2a2a" stroke-width="1"/></svg>
<svg style="left:473px;top:268px;" width="20" height="18" viewBox="0 0 20 18"><rect x="1.5" y="4.2" width="16.5" height="12.9" rx="1.8" fill="none" stroke="#2a2a2a" stroke-width="1"/><path d="M5.9 4.2V2.5Q5.9 1.5 6.9 1.5H12Q13 1.5 13 2.5V4.2" fill="none" stroke="#2a2a2a" stroke-width="1"/></svg>
<span class="t" style="left:480.70px;top:276px;font-size:7.1px;line-height:7.1px;color:#2a2a2a;transform:scaleX(1.0000);font-weight:700;">$</span>
<svg style="left:552px;top:268px;" width="24" height="19" viewBox="0 0 24 19"><rect x="1.9" y="5.6" width="12.7" height="11.8" rx="1.2" fill="none" stroke="#2a2a2a" stroke-width="1"/><path d="M1.9 6.2L6.3 1.5H16.9L14.6 5.6M16.9 1.5L21 3.3L18.7 7.7L14.6 5.6M14.6 17.2L19.6 13V6.2" fill="none" stroke="#2a2a2a" stroke-width="1" stroke-linejoin="round"/><path d="M6.3 7.8H10.4" stroke="#2a2a2a" stroke-width="1"/></svg>
<svg style="left:636px;top:268px;" width="18" height="18" viewBox="0 0 18 18"><path d="M3 2.4Q3.2 1.5 4.2 1.5H14.6Q15.8 1.5 15.8 2.7V13.6Q15.8 14.8 14.6 14.8H12" fill="none" stroke="#2a2a2a" stroke-width="1"/><rect x="1.4" y="2.7" width="10.3" height="14.2" rx="1.2" fill="#fff" stroke="#2a2a2a" stroke-width="1"/><path d="M3.7 5H9.4M3.7 7.7H9.4" stroke="#2a2a2a" stroke-width="1.3"/></svg>
<svg style="left:717px;top:269px;" width="18" height="19" viewBox="0 0 18 19"><path d="M1.3 4.7H16.3" stroke="#333" stroke-width="1.1"/><path d="M4.7 4.7V2.9Q4.7 2.3 5.3 2.3H12.1Q12.7 2.3 12.7 2.9V4.7" fill="none" stroke="#333" stroke-width="1"/><path d="M3.2 5V16.1Q3.2 17.3 4.4 17.3H13.3Q14.5 17.3 14.5 16.1V5" fill="none" stroke="#333" stroke-width="1"/><path d="M6.7 8.3V14.3M10.7 8.3V14.3" stroke="#333" stroke-width="1.2"/></svg>
<svg style="left:692px;top:244px;" width="78.2" height="75.7" viewBox="0 0 78.2 75.7"><rect x="2.35" y="2.35" width="73.5" height="71" rx="1.6" fill="none" stroke="#ff0000" stroke-width="4.7"/></svg>
<span class="t" style="left:774.75px;top:132px;font-size:9.71px;line-height:9.71px;color:#111;transform:scaleX(1.0000);font-weight:700;">#</span>
<span class="t" style="left:775.25px;top:152px;font-size:8.41px;line-height:8.41px;color:#111;transform:scaleX(1.0000);font-weight:700;">$</span>
<span class="t" style="left:774.80px;top:165px;font-size:17.54px;line-height:17.54px;color:#111;transform:scaleX(1.0000);font-weight:700;">•</span>
<span class="t" style="left:774.75px;top:187px;font-size:8.41px;line-height:8.41px;color:#111;transform:scaleX(1.0000);font-weight:700;">B</span>
<span class="t" style="left:774.80px;top:201px;font-size:17.54px;line-height:17.54px;color:#111;transform:scaleX(1.0000);font-weight:700;">•</span>
<span class="t" style="left:774.75px;top:222px;font-size:8.41px;line-height:8.41px;color:#111;transform:scaleX(1.0000);font-weight:700;">D</span>
<span class="t" style="left:774.80px;top:236px;font-size:17.54px;line-height:17.54px;color:#111;transform:scaleX(1.0000);font-weight:700;">•</span>
<span class="t" style="left:774.75px;top:257px;font-size:8.41px;line-height:8.41px;color:#111;transform:scaleX(1.0000);font-weight:700;">G</span>
<span class="t" style="left:774.80px;top:271px;font-size:17.54px;line-height:17.54px;color:#111;transform:scaleX(1.0000);font-weight:700;">•</span>
<span class="t" style="left:775.25px;top:292px;font-size:8.41px;line-height:8.41px;color:#111;transform:scaleX(1.0000);font-weight:700;">J</span>
<span class="t" style="left:774.80px;top:306px;font-size:17.54px;line-height:17.54px;color:#111;transform:scaleX(1.0000);font-weight:700;">•</span>
<span class="t" style="left:774.25px;top:327px;font-size:8.41px;line-height:8.41px;color:#111;transform:scaleX(1.0000);font-weight:700;">M</span>
<span class="t" style="left:774.80px;top:341px;font-size:17.54px;line-height:17.54px;color:#111;transform:scaleX(1.0000);font-weight:700;">•</span>
<span class="t" style="left:774.25px;top:363px;font-size:8.41px;line-height:8.41px;color:#111;transform:scaleX(1.0000);font-weight:700;">O</span>
<span class="t" style="left:774.80px;top:376px;font-size:17.54px;line-height:17.54px;color:#111;transform:scaleX(1.0000);font-weight:700;">•</span>
<span class="t" style="left:774.75px;top:398px;font-size:8.41px;line-height:8.41px;color:#111;transform:scaleX(1.0000);font-weight:700;">R</span>
<span class="t" style="left:774.80px;top:411px;font-size:17.54px;line-height:17.54px;color:#111;transform:scaleX(1.0000);font-weight:700;">•</span>
<span class="t" style="left:774.75px;top:433px;font-size:8.41px;line-height:8.41px;color:#111;transform:scaleX(1.0000);font-weight:700;">U</span>
<span class="t" style="left:774.80px;top:446px;font-size:17.54px;line-height:17.54px;color:#111;transform:scaleX(1.0000);font-weight:700;">•</span>
<span class="t" style="left:773.75px;top:468px;font-size:8.41px;line-height:8.41px;color:#111;transform:scaleX(1.0000);font-weight:700;">W</span>
<span class="t" style="left:774.80px;top:482px;font-size:17.54px;line-height:17.54px;color:#111;transform:scaleX(1.0000);font-weight:700;">•</span>
<span class="t" style="left:775.25px;top:503px;font-size:8.41px;line-height:8.41px;color:#111;transform:scaleX(1.0000);font-weight:700;">Z</span>
<div style="left:6px;top:0px;width:783px;height:46.4px;background:#171426;"></div>
<span class="t" style="left:13.30px;top:-7px;font-size:11.59px;line-height:11.59px;color:#4d4b60;transform:scaleX(0.7946);font-weight:700;">7:20 PM   Sat Sep 21</span>
<span class="t" style="left:741.00px;top:-7px;font-size:11.59px;line-height:11.59px;color:#4d4b60;transform:scaleX(0.7000);font-weight:700;">100%</span>
<div style="left:765.8px;top:-3px;width:17.5px;height:4px;background:#55536a;border-radius:1px;"></div>
<span class="t" style="left:333.10px;top:20px;font-size:13.19px;line-height:13.19px;color:#fff;transform:scaleX(0.9771);font-weight:700;">ITEM MANAGEMENT</span>
<span class="t" style="left:636.00px;top:22px;font-size:8.12px;line-height:8.12px;color:#f0f0f4;transform:scaleX(0.9182);">SYNC</span>
<svg style="left:21.6px;top:10.5px;" width="30" height="30" viewBox="0 0 30 30"><circle cx="15" cy="15" r="13.85" fill="none" stroke="#d2d2da" stroke-width="1.1"/></svg>
<svg style="left:58.599999999999994px;top:10.5px;" width="30" height="30" viewBox="0 0 30 30"><circle cx="15" cy="15" r="13.85" fill="none" stroke="#d2d2da" stroke-width="1.1"/></svg>
<svg style="left:631.2px;top:10.5px;" width="30" height="30" viewBox="0 0 30 30"><circle cx="15" cy="15" r="13.85" fill="none" stroke="#d2d2da" stroke-width="1.1"/></svg>
<svg style="left:669.2px;top:10.5px;" width="30" height="30" viewBox="0 0 30 30"><circle cx="15" cy="15" r="13.85" fill="none" stroke="#d2d2da" stroke-width="1.1"/></svg>
<svg style="left:707.6px;top:10.5px;" width="30" height="30" viewBox="0 0 30 30"><circle cx="15" cy="15" r="13.85" fill="none" stroke="#d2d2da" stroke-width="1.1"/></svg>
<svg style="left:743.4px;top:10.5px;" width="30" height="30" viewBox="0 0 30 30"><circle cx="15" cy="15" r="13.85" fill="none" stroke="#d2d2da" stroke-width="1.1"/></svg>
<svg style="left:30px;top:20px;" width="14" height="12" viewBox="0 0 14 12"><path d="M0.6 1.5H13M0.6 5.9H13M0.6 10.3H13" stroke="#dcdce4" stroke-width="1.2"/></svg>
<svg style="left:64px;top:15px;" width="20" height="20" viewBox="0 0 20 20"><rect x="0.8" y="2.7" width="17.8" height="15.7" fill="none" stroke="#dcdce4" stroke-width="1.1" opacity=".9"/><path d="M2.4 3.2V17.9" stroke="#dcdce4" stroke-width=".7" opacity=".55"/><path d="M4.6 1.8H7.4M11.8 1.8H14.6" stroke="#fff" stroke-width="1.3"/></svg>
<span class="t" style="left:67.90px;top:21px;font-size:11.74px;line-height:11.74px;color:#dcdce4;transform:scaleX(0.8769);font-weight:700;">21</span>
<svg style="left:676px;top:18px;" width="16" height="14" viewBox="0 0 16 14"><rect x="1.8" y="4.3" width="13" height="9.2" fill="none" stroke="#dcdce4" stroke-width="1"/><path d="M1.8 2.2H6.6Q8 2.2 8 4.2" fill="none" stroke="#dcdce4" stroke-width="1"/><path d="M1.8 7.3H14.8M1.8 10.3H14.8M4.6 4.3V13.5M7.3 4.3V13.5M10 4.3V13.5M12.6 4.3V13.5" stroke="#dcdce4" stroke-width=".7" opacity=".85"/></svg>
<svg style="left:715px;top:18px;" width="16" height="16" viewBox="0 0 16 16"><ellipse cx="7.7" cy="3.8" rx="5.7" ry="1.7" fill="none" stroke="#dcdce4" stroke-width="1"/><path d="M2 4.2L6.8 10.2V13.4H8.6V10.2L13.4 4.2" fill="none" stroke="#dcdce4" stroke-width="1"/></svg>
<span class="t" style="left:755.40px;top:18px;font-size:17.25px;line-height:17.25px;color:#dcdce4;transform:scaleX(0.6444);">?</span>
<div style="left:6px;top:46px;width:783px;height:43.2px;background:#fff;"></div>
<div style="left:21px;top:53.7px;width:668px;height:28.3px;background:#ececec;border-radius:14.2px 0 0 14.2px;"></div>
<span class="t" style="left:44.40px;top:64px;font-size:10.72px;line-height:10.72px;color:#bdbdbd;transform:scaleX(0.9539);">UPC, ITEM NUMBER, DESCRIPTION, DEPARTMENT, ETC..</span>
<div style="left:673.4px;top:53.8px;width:28.4px;height:28.4px;background:#171426;border-radius:50%;"></div>
<div style="left:708.5px;top:53.8px;width:28.4px;height:28.4px;background:#171426;border-radius:50%;"></div>
<div style="left:744.3px;top:53.8px;width:28.4px;height:28.4px;background:#171426;border-radius:50%;"></div>
<svg style="left:679px;top:62px;" width="18" height="12" viewBox="0 0 18 12"><path d="M0.9 6.1Q8.8 -2.2 16.8 6.1Q8.8 14.4 0.9 6.1Z" fill="none" stroke="#e4e4ea" stroke-width="1"/><circle cx="8.8" cy="6.1" r="3" fill="none" stroke="#e4e4ea" stroke-width="1.3"/></svg>
<svg style="left:715px;top:60px;" width="16" height="16" viewBox="0 0 16 16"><circle cx="6.6" cy="7.4" r="4.9" fill="none" stroke="#e4e4ea" stroke-width="1"/><path d="M10.2 11L13.5 14.3" stroke="#e4e4ea" stroke-width="1"/></svg>
<svg style="left:750px;top:61px;" width="18" height="14" viewBox="0 0 18 14"><path d="M1.5 3.4H4.8V1.4H12.9V3.4H15.9V12.8H1.5Z" fill="none" stroke="#e4e4ea" stroke-width="1"/><circle cx="8.7" cy="8.2" r="2.9" fill="none" stroke="#e4e4ea" stroke-width="1"/></svg>
<div style="left:6px;top:89px;width:783px;height:22.2px;background:#ff9a06;"></div>
<span class="t" style="left:21.20px;top:96px;font-size:10.58px;line-height:10.58px;color:#fff1dc;transform:scaleX(0.9657);font-weight:700;">IMAGE</span>
<span class="t" style="left:77.60px;top:96px;font-size:10.58px;line-height:10.58px;color:#fff1dc;transform:scaleX(0.9424);font-weight:700;">ITEM NAME</span>
<span class="t" style="left:277.40px;top:96px;font-size:10.58px;line-height:10.58px;color:#fff1dc;transform:scaleX(0.9353);font-weight:700;">ITEM #</span>
<span class="t" style="left:428.60px;top:96px;font-size:10.58px;line-height:10.58px;color:#fff1dc;transform:scaleX(0.9182);font-weight:700;">UPC</span>
<span class="t" style="left:493.60px;top:96px;font-size:10.58px;line-height:10.58px;color:#fff1dc;transform:scaleX(0.9275);font-weight:700;">QTY OH</span>
<span class="t" style="left:565.60px;top:96px;font-size:10.58px;line-height:10.58px;color:#fff1dc;transform:scaleX(0.9344);font-weight:700;">PRICE</span>
<span class="t" style="left:635.80px;top:96px;font-size:10.58px;line-height:10.58px;color:#fff1dc;transform:scaleX(0.7833);font-weight:700;">COST</span>
<span class="t" style="left:691.60px;top:96px;font-size:10.58px;line-height:10.58px;color:#fff1dc;transform:scaleX(0.7743);font-weight:700;">SALES</span>
<svg style="left:142.2px;top:96.4px;" width="4.6" height="3.4" viewBox="0 0 4.6 3.4"><path d="M2.3 0L4.6 3.4H0Z" fill="#fff1dc"/></svg>
<svg style="left:312.2px;top:95.4px;" width="4.6" height="9.4" viewBox="0 0 4.6 9.4"><path d="M2.3 0L4.6 3.9H0Z M2.3 9.4L4.6 5.5H0Z" fill="#fff1dc"/></svg>
<svg style="left:536.6px;top:95.4px;" width="4.6" height="9.4" viewBox="0 0 4.6 9.4"><path d="M2.3 0L4.6 3.9H0Z M2.3 9.4L4.6 5.5H0Z" fill="#fff1dc"/></svg>
<svg style="left:597.5px;top:95.4px;" width="4.6" height="9.4" viewBox="0 0 4.6 9.4"><path d="M2.3 0L4.6 3.9H0Z M2.3 9.4L4.6 5.5H0Z" fill="#fff1dc"/></svg>
<svg style="left:666.2px;top:95.4px;" width="4.6" height="9.4" viewBox="0 0 4.6 9.4"><path d="M2.3 0L4.6 3.9H0Z M2.3 9.4L4.6 5.5H0Z" fill="#fff1dc"/></svg>
<svg style="left:723.4px;top:95.4px;" width="4.6" height="9.4" viewBox="0 0 4.6 9.4"><path d="M2.3 0L4.6 3.9H0Z M2.3 9.4L4.6 5.5H0Z" fill="#fff1dc"/></svg>
<div style="left:6px;top:528.8px;width:783px;height:47.2px;background:#171426;"></div>
<span class="t" style="left:298.85px;top:560px;font-size:7.39px;line-height:7.39px;color:#ececf1;transform:scaleX(1.1000);font-weight:700;letter-spacing:0.5px;">ADD</span>
<span class="t" style="left:357.35px;top:560px;font-size:7.39px;line-height:7.39px;color:#ececf1;transform:scaleX(1.1000);font-weight:700;letter-spacing:0.5px;">INFO</span>
<span class="t" style="left:412.00px;top:560px;font-size:7.39px;line-height:7.39px;color:#ececf1;transform:scaleX(0.9375);font-weight:700;letter-spacing:0.5px;">SELECT</span>
<span class="t" style="left:460.45px;top:560px;font-size:7.39px;line-height:7.39px;color:#6b697d;transform:scaleX(0.9611);font-weight:700;letter-spacing:0.5px;">LABLE PRINT</span>
<span class="t" style="left:523.00px;top:560px;font-size:7.39px;line-height:7.39px;color:#6b697d;transform:scaleX(1.0533);font-weight:700;letter-spacing:0.5px;">ADD TO PO</span>
<span class="t" style="left:45.90px;top:544px;font-size:8.55px;line-height:8.55px;color:#ececf1;transform:scaleX(0.9944);">LOG</span>
<span class="t" style="left:45.90px;top:552px;font-size:8.55px;line-height:8.55px;color:#ececf1;transform:scaleX(1.0667);">OUT</span>
<svg style="left:18px;top:540px;" width="24" height="24" viewBox="0 0 24 24"><path d="M14.9 4.3H3.1V20.1H14.9" fill="none" stroke="#e9e9ee" stroke-width="1"/><path d="M9.2 12.1H20.4M16.8 8.1L20.6 12.1L16.8 16.3" fill="none" stroke="#e9e9ee" stroke-width="1"/></svg>
<svg style="left:300px;top:538px;" width="16" height="16" viewBox="0 0 16 16"><path d="M8.2 0.5V15.9M0.5 8.2H15.9" stroke="#f0f0f4" stroke-width="1.1" fill="none"/></svg>
<svg style="left:359.9px;top:538.2px;" width="16" height="16" viewBox="0 0 16 16"><circle cx="8" cy="8" r="7.4" fill="none" stroke="#f0f0f4" stroke-width="1"/><circle cx="7.9" cy="4.6" r="1" fill="#f0f0f4"/><path d="M6.6 7H8.5V11.3M6.4 11.4H10" stroke="#f0f0f4" stroke-width="1.2" fill="none"/></svg>
<svg style="left:419px;top:538px;" width="17" height="17" viewBox="0 0 17 17"><path d="M8.4 1.8H0.6V15.2H14.8V7" fill="none" stroke="#f0f0f4" stroke-width="1"/><path d="M5.5 7.1L8.1 9.8L15.6 1.1" fill="none" stroke="#f0f0f4" stroke-width="1"/></svg>
<svg style="left:479px;top:538px;" width="17" height="17" viewBox="0 0 17 17"><path d="M4.3 8.2V0.6H9.6Q12.4 0.8 12.4 4V8.2" fill="none" stroke="#7a788c" stroke-width="1"/><rect x="1.4" y="8.2" width="13.6" height="6" rx="1" fill="none" stroke="#7a788c" stroke-width="1"/><path d="M4.2 14.2V15.6H6.6V14.2M9.8 14.2V15.6H12.2V14.2" fill="none" stroke="#7a788c" stroke-width="1"/></svg>
<svg style="left:539px;top:538.6px;" width="17" height="17" viewBox="0 0 17 17"><rect x="0.6" y="0.6" width="12.8" height="14" rx="1" fill="none" stroke="#7a788c" stroke-width="1"/><path d="M3 4.4H4.6M6 4.4H10.6M3 7.6H4.6M6 7.6H10M3 10.8H4.6M6 10.8H9" stroke="#7a788c" stroke-width="1.2"/><circle cx="13.1" cy="11" r="2.5" fill="#171426" stroke="#7a788c" stroke-width="1"/><path d="M12 11H14.2M13.1 9.9V12.1" stroke="#7a788c" stroke-width=".7"/></svg>
<div style="left:0px;top:0px;width:6px;height:580px;background:#000;"></div>
<div style="left:789px;top:0px;width:2px;height:580px;background:#000;"></div>
<div style="left:0px;top:576px;width:791px;height:4px;background:#000;"></div>
</div></body></html>
